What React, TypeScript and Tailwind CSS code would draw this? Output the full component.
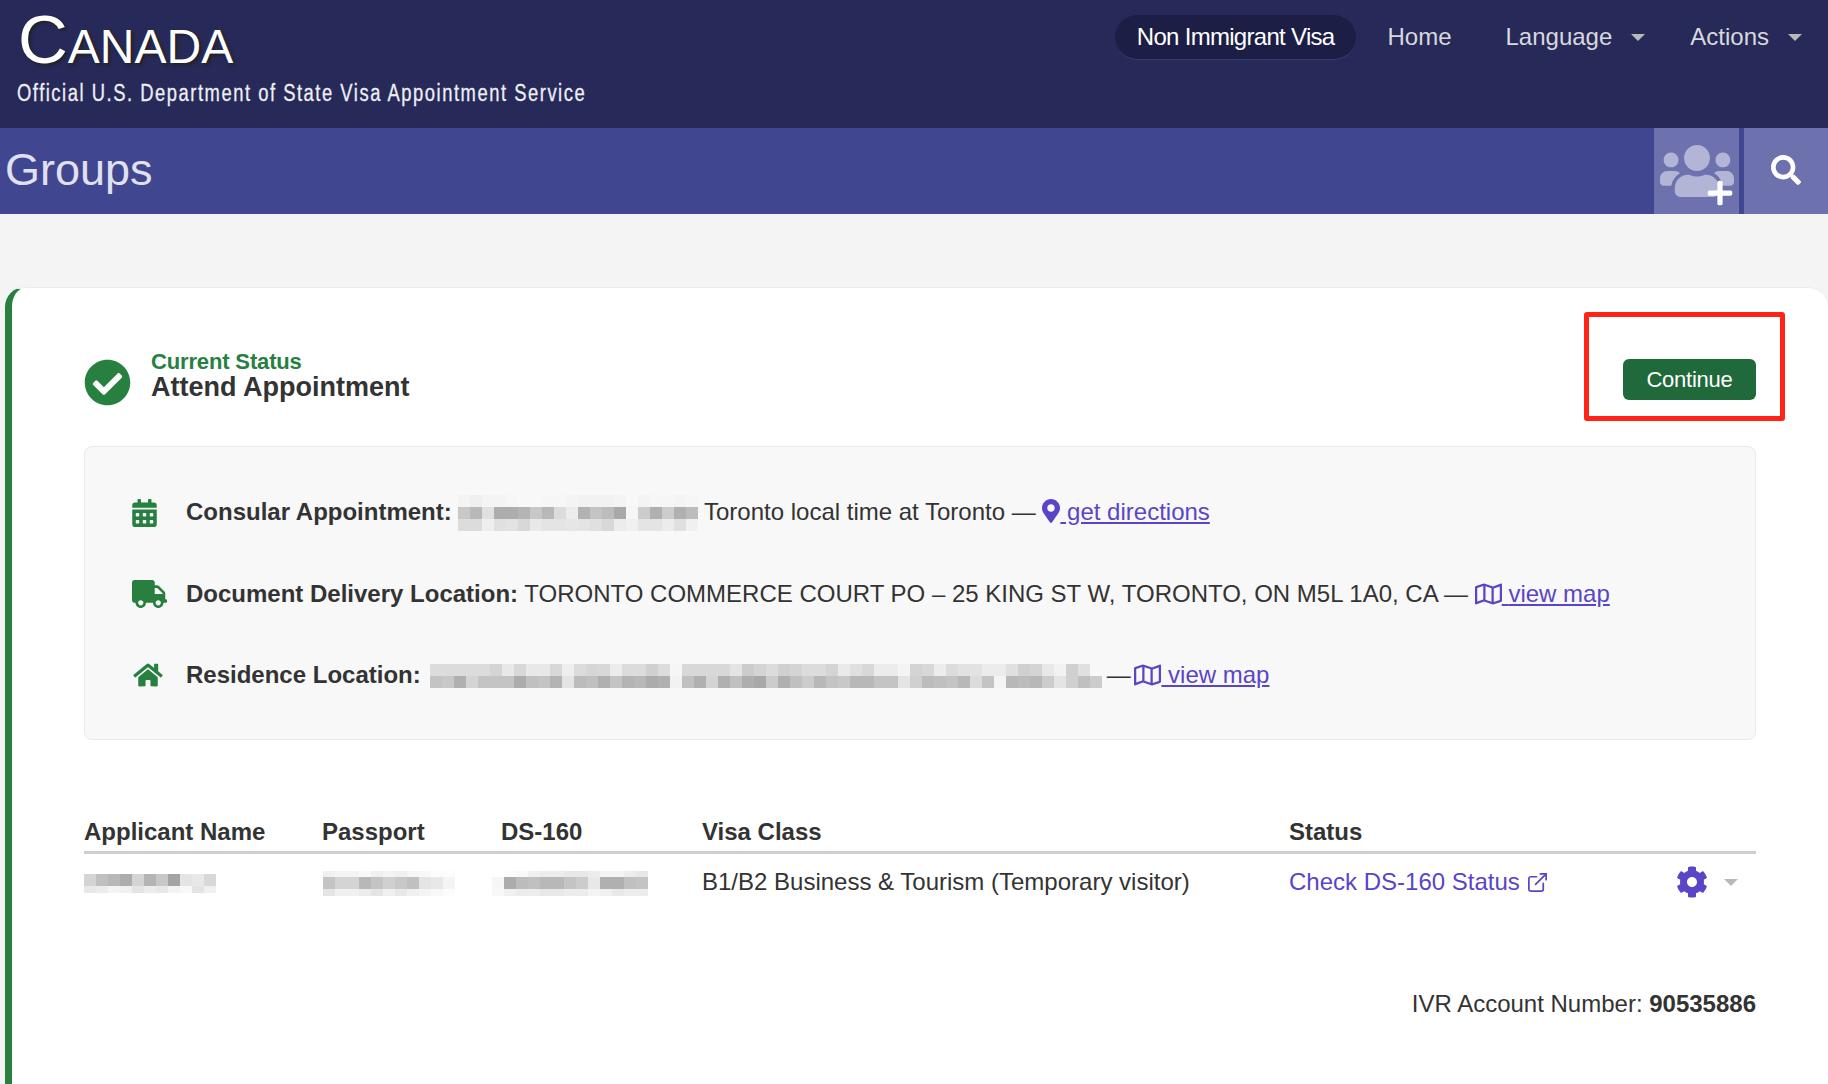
import { ExternalLink } from 'lucide-react';
import {
  FaCalendarAlt,
  FaCheckCircle,
  FaCog,
  FaHome,
  FaMapMarkerAlt,
  FaPlus,
  FaRegMap,
  FaSearch,
  FaTruck,
  FaUsers,
} from 'react-icons/fa';

// redacted values in the screenshot: rows of 12px mosaic tiles, as grey levels
function Mosaic({ rows, className = '' }: { rows: { h: number; tiles: string }[]; className?: string }) {
  return (
    <span className={`inline-flex flex-col align-middle ${className}`}>
      {rows.map((row, r) => (
        <span key={r} className="flex">
          {row.tiles.split(' ').map((g, i) => (
            <span key={i} className="w-[12px] shrink-0" style={{ height: row.h, background: `#${g}${g}${g}` }} />
          ))}
        </span>
      ))}
    </span>
  );
}

const consular = [
  { h: 12, tiles: 'f4 f0 f4 f4 f6 f8 f8 f6 f6 f4 f2 f2 f2 f4 f8 f4 f6 f6 f4 f6' },
  { h: 12, tiles: 'c8 b8 e0 ad ad b4 c8 b8 dc ec b2 c4 bc a8 f6 cc b0 cc b0 bc' },
  { h: 12, tiles: 'dc dc ee e0 e2 d8 e8 e4 e4 e6 e4 e0 d8 ec f0 e4 e4 ec e0 f0' },
];

const residence = [
  {
    h: 12,
    tiles:
      'dc dc dc dc dc d4 e8 d8 e8 e8 d8 ee dc d6 d8 ec dc dc d0 dc f6 d8 d8 d8 d8 e4 cc d4 dc d0 d4 dc dc d4 ea e0 d8 ec ec f4 d4 d8 ec dc e2 e2 ec ec e0 d0 d4 e8 f2 d0 e0 f8',
  },
  {
    h: 12,
    tiles:
      'c4 c8 b0 d4 c4 c4 c4 ac c0 c4 b4 e4 bc c0 b0 c4 b4 b8 ac b0 f2 c0 b0 d4 b0 c0 ae a8 cc b0 c0 cc b8 c4 c8 b8 b8 c4 c4 e4 d0 bc c0 c4 b8 dc c4 f4 b8 bc b8 cc e4 d0 c0 cc',
  },
];

const applicantName = [
  { h: 12, tiles: 'd4 c0 b8 ac d4 b4 c8 a4 e4 e8 d8' },
  { h: 7, tiles: 'e8 ec f4 f0 e4 ec e8 f4 f8 e4 f0' },
];

const passport = [
  { h: 6, tiles: 'f0 f4 f4 f8 f0 f4 f0 f6 f8 fc fc' },
  { h: 12, tiles: 'c4 d4 d4 b8 c4 d0 c8 c0 e4 e8 f4' },
  { h: 7, tiles: 'e4 f0 f0 ec e4 f0 e8 f0 f4 f8 fc' },
];

const ds160 = [
  { h: 6, tiles: 'ff fc f8 f0 ec ec e8 e8 ec f4 f4 ec e8' },
  { h: 12, tiles: 'f6 ac bc c0 b8 b8 c4 cc e8 b0 b0 c0 c4' },
  { h: 7, tiles: 'f8 f0 ec ec e8 e8 ec ec f4 f0 e8 ec ec' },
];

function Caret({ className = '' }: { className?: string }) {
  return <span className={`inline-block h-0 w-0 border-x-[7px] border-t-[7px] border-x-transparent border-t-[#b9b9b9] ${className}`} />;
}

function MapLink({ label, className = '' }: { label: string; className?: string }) {
  return (
    <a className={`text-[#5a45c7] underline ${className}`}>
      <FaRegMap className="inline-block h-[24px] w-[27px] align-[-4px]" /> {label}
    </a>
  );
}

function InfoRow({ icon, children }: { icon: React.ReactNode; children: React.ReactNode }) {
  return (
    <div className="flex h-[81px] items-center whitespace-nowrap">
      <div className="flex w-[54px] shrink-0 items-center text-[#27803f]">{icon}</div>
      <div>{children}</div>
    </div>
  );
}

export default function App() {
  return (
    <div className="h-[1084px] overflow-hidden bg-[#f4f4f4] font-['Liberation_Sans',Arial,sans-serif] text-[#333]">
      <header className="flex h-[128px] justify-between bg-[#272958] pl-[18px] pr-[26px]">
        <div className="whitespace-nowrap">
          <div className="mt-[8px] text-[69px] leading-[64px] text-white [font-variant:small-caps] [text-shadow:2px_2px_3px_#222]">
            Canada
          </div>
          <div className="-ml-[1px] mt-[7px] origin-left scale-x-[0.8] text-[23px] leading-[28px] tracking-[1.9px] text-[#eeeef6] [-webkit-text-stroke:0.3px_#eeeef6]">
            Official U.S. Department of State Visa Appointment Service
          </div>
        </div>
        <nav className="flex h-[60px] items-center pt-[14px] text-[24px] text-[#d8d8de]">
          <span className="flex h-[45px] items-center rounded-full border-b border-[#3a3c70] bg-[#1c1e45] px-[22px] tracking-[-0.7px] text-white">
            Non Immigrant Visa
          </span>
          <span className="ml-[31px]">Home</span>
          <span className="ml-[54px]">Language</span>
          <Caret className="ml-[19px]" />
          <span className="ml-[45px]">Actions</span>
          <Caret className="ml-[19px]" />
        </nav>
      </header>

      <div className="flex h-[86px] items-center justify-between bg-[#40468f] pl-[5px]">
        <h1 className="-mt-[3px] text-[45px] leading-none text-[#e0e0ee]">Groups</h1>
        <div className="flex h-full gap-[5px]">
          <button className="relative flex h-full w-[85px] items-center justify-center bg-[#6d72ae]">
            <FaUsers className="h-[60px] w-[74px] text-[#b3b5d7]" />
            <FaPlus className="absolute bottom-[7px] right-[5px] h-[28px] w-[28px] text-white" />
          </button>
          <button className="flex h-full w-[84px] items-center justify-center bg-[#6d72ae]">
            <FaSearch className="-mt-[3px] h-[30px] w-[30px] text-white" />
          </button>
        </div>
      </div>

      <main className="ml-[5px] mt-[73px] h-[800px] rounded-t-[20px] border-l-[7px] border-t border-[#27803f] border-t-[#ececec] bg-white pl-[72px] pr-[72px]">
        <div className="flex h-[158px] items-start justify-between pt-[71px]">
          <div className="flex items-start">
            <FaCheckCircle className="h-[47px] w-[47px] text-[#27803f]" />
            <div className="-mt-[9px] ml-[20px]">
              <div className="text-[22px] font-bold leading-[24px] tracking-[-0.15px] text-[#27803f]">Current Status</div>
              <div className="-mt-[2px] text-[27px] font-bold leading-[30px]">Attend Appointment</div>
            </div>
          </div>
          <div className="relative">
            <button className="flex h-[41px] w-[133px] items-center justify-center rounded-[6px] bg-[#20693a] text-[22px] tracking-[-0.25px] text-white">
              Continue
            </button>
            <div className="absolute -left-[39px] -top-[47px] h-[109px] w-[201px] rounded-[3px] border-[5px] border-[#ff2416]" />
          </div>
        </div>

        <section className="h-[294px] rounded-[8px] border border-[#e8e8e8] bg-[#f8f8f8] pl-[47px] pt-[25px] text-[24px]">
          <InfoRow icon={<FaCalendarAlt className="h-[28px] w-[25px]" />}>
            <b>Consular Appointment:</b>
            <Mosaic rows={consular} className="ml-[6px]" /> Toronto local time at Toronto —{' '}
            <a className="text-[#5a45c7] underline">
              <FaMapMarkerAlt className="inline-block h-[24px] w-[18px] align-[-3px]" /> get directions
            </a>
          </InfoRow>
          <InfoRow icon={<FaTruck className="h-[28px] w-[35px]" />}>
            <b>Document Delivery Location:</b> TORONTO COMMERCE COURT PO – 25 KING ST W, TORONTO, ON M5L 1A0, CA —{' '}
            <MapLink label="view map" />
          </InfoRow>
          <InfoRow icon={<FaHome className="h-[26px] w-[32px]" />}>
            <b>Residence Location:</b>
            <Mosaic rows={residence} className="ml-[9px] mr-[5px]" />—{' '}
            <MapLink label="view map" className="-ml-[3px]" />
          </InfoRow>
        </section>

        <div className="mt-[77px] grid grid-cols-[238px_179px_201px_587px_1fr] border-b-[3px] border-[#cfcfcf] pb-[4px] text-[24px] font-bold leading-[30px]">
          <span>Applicant Name</span>
          <span>Passport</span>
          <span>DS-160</span>
          <span>Visa Class</span>
          <span>Status</span>
        </div>
        <div className="grid h-[56px] grid-cols-[238px_179px_201px_587px_1fr] items-center text-[24px]">
          <span>
            <Mosaic rows={applicantName} />
          </span>
          <span>
            <Mosaic rows={passport} className="ml-px" />
          </span>
          <span>
            <Mosaic rows={ds160} className="-ml-[9px]" />
          </span>
          <span>B1/B2 Business &amp; Tourism (Temporary visitor)</span>
          <div className="flex items-center justify-between">
            <a className="flex items-center text-[#5a45c7]">
              Check DS-160 Status
              <ExternalLink className="ml-[6px] h-[23px] w-[23px]" strokeWidth={1.8} />
            </a>
            <div className="flex items-center pr-[18px]">
              <FaCog className="h-[32px] w-[32px] text-[#5a45c7]" />
              <Caret className="ml-[16px]" />
            </div>
          </div>
        </div>

        <div className="mt-[79px] text-right text-[24px] leading-[30px]">
          IVR Account Number: <b>90535886</b>
        </div>
      </main>
    </div>
  );
}
